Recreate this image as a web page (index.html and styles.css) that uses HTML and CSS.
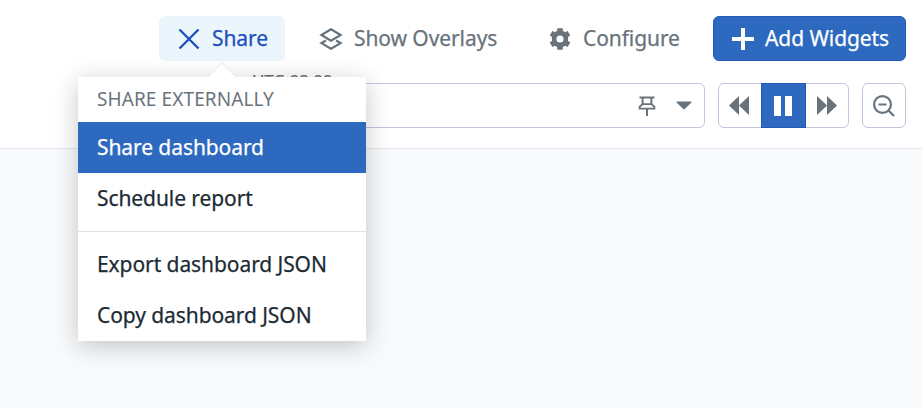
FILE: index.html
```html
<!DOCTYPE html>
<html lang="en">
<head>
<meta charset="utf-8">
<title>Dashboard</title>
<link rel="stylesheet" href="styles.css">
</head>
<body>
<header class="header">
  <nav class="actions">
    <div class="share">
      <button class="btn btn-share">
        <svg class="icon" width="22" height="22" viewBox="0 0 22 22"><path d="M1.500 1.500l19 19M20.500 1.500l-19 19" stroke="currentColor" stroke-width="2.300" fill="none"/></svg>
        <span>Share</span>
      </button>
      <div class="menu">
        <svg class="arrow" width="30" height="16" viewBox="0 0 30 16"><path d="M0 16L15 1l15 15z" fill="#fff"/><path d="M1 15L15 1l14 14" fill="none" stroke="#e4e5ef"/></svg>
        <div class="menu-title">SHARE EXTERNALLY</div>
        <a class="item active"><span>Share dashboard</span></a>
        <a class="item"><span>Schedule report</span></a>
        <div class="divider"></div>
        <a class="item"><span>Export dashboard JSON</span></a>
        <a class="item"><span>Copy dashboard JSON</span></a>
      </div>
    </div>
    <button class="btn btn-overlays">
      <svg class="icon" width="24" height="22" viewBox="0 0 24 22"><path d="M12 1.200l9.600 5.800-9.600 5.800-9.600-5.800zM7 12.500l-4.600 2.600 9.600 5.700 9.600-5.700-4.600-2.600" fill="none" stroke="currentColor" stroke-width="2.200"/></svg>
      <span>Show Overlays</span>
    </button>
    <button class="btn btn-configure">
      <svg class="icon" width="22" height="22" viewBox="0 0 22 22"><path fill="currentColor" fill-rule="evenodd" d="M8.200.3h5.600v2.700q1.300.5 2.400 1.300l2.400-1.400 2.700 4.500-2.300 1.500q.3 2.100 0 4.200l2.300 1.500-2.700 4.500-2.400-1.400q-1.100.8-2.400 1.300v2.700H8.200V19q-1.300-.5-2.400-1.300l-2.400 1.400L.7 14.600l2.300-1.500q-.3-2.100 0-4.200L.7 7.400l2.700-4.500 2.400 1.400Q6.900 3.500 8.200 3zM11 7.400a3.600 3.600 0 1 0 0 7.200a3.600 3.600 0 1 0 0-7.200z"/></svg>
      <span>Configure</span>
    </button>
    <button class="btn btn-add">
      <svg class="icon" width="22" height="22" viewBox="0 0 22 22"><path d="M11 0v22M0 11h22" stroke="currentColor" stroke-width="4"/></svg>
      <span>Add Widgets</span>
    </button>
  </nav>
  <div class="controls">
    <div class="timebox">
      <span class="zone">UTC-08:00</span>
      <svg width="18" height="20" viewBox="0 0 18 20"><path d="M1.500 1.500h15M4.600 1v7.500M13.400 1v7.500M9 13v7" stroke="currentColor" stroke-width="2"/><path d="M4.600 8.200L1.600 10.600v2h14.800v-2l-3-2.400z" fill="none" stroke="currentColor" stroke-width="1.800"/></svg>
      <svg width="16" height="9" viewBox="0 0 16 9"><path d="M1 .5h14q.8.500.2 1.200L8.700 8q-.7.700-1.400 0L.8 1.700Q.2 1 1 .5z" fill="currentColor"/></svg>
    </div>
    <div class="playback">
      <button class="cell back"><svg width="20" height="19" viewBox="0 0 20 19"><path d="M10 0v19L0 9.500zM20 0v19L10 9.500z" fill="currentColor"/></svg></button>
      <button class="cell pause"><svg width="18" height="20" viewBox="0 0 18 20"><path d="M0 0h7v20H0zM11 0h7v20h-7z" fill="currentColor"/></svg></button>
      <button class="cell"><svg width="20" height="19" viewBox="0 0 20 19"><path d="M0 0L10 9.500 0 19zM10 0l10 9.500L10 19z" fill="currentColor"/></svg></button>
    </div>
    <button class="zoom"><svg width="22" height="22" viewBox="0 0 22 22"><g fill="none" stroke="currentColor" stroke-width="2.200"><circle cx="9.500" cy="9.500" r="8.400"/><path d="M5.500 9.500h8M15.500 15.500l5.500 5.500"/></g></svg></button>
  </div>
</header>
<main class="canvas"></main>
</body>
</html>
```
FILE: styles.css
```css
* { box-sizing: border-box; }
body {
  margin: 0;
  min-height: 408px;
  background: #f9fafc;
  font-family: "Noto Sans", sans-serif;
  font-size: 21px;
  letter-spacing: -0.08px;
  -webkit-text-stroke: 0.25px currentColor;
  color: #1c2b34;
}
button { font: inherit; letter-spacing: inherit; color: inherit; border: 0; background: none; padding: 0; }
svg { display: block; flex: none; }
.header {
  height: 149px;
  padding: 16px 16px 0 0;
  background: #fff;
  border-bottom: 1px solid #e0e5ed;
}
.actions { display: flex; justify-content: flex-end; color: #69737b; }
.share { position: relative; margin-right: 16px; }
.btn {
  display: flex;
  align-items: center;
  height: 45px;
  border-radius: 6px;
  white-space: nowrap;
  line-height: 45px;
}
.btn-share { width: 126px; padding-left: 19px; gap: 12px; background: #ebf5fc; color: #1d4fba; }
.btn-overlays { width: 230px; padding-left: 18px; gap: 11px; }
.btn-configure { width: 182px; padding-left: 18px; gap: 12px; }
.btn-add {
  width: 193px;
  padding-left: 18px;
  gap: 11px;
  background: #2d69be;
  color: #fff;
  border: 1px solid #2359b5;
}
.menu {
  position: absolute;
  z-index: 2;
  top: 61px;
  left: -81px;
  width: 288px;
  height: 264px;
  background: #fff;
  color: #1c2b34;
  box-shadow: 0 5px 24px rgba(0, 0, 0, .22);
}
.arrow { position: absolute; left: 129px; top: -15px; }
.menu-title {
  height: 45px;
  padding-left: 19px;
  font-size: 19px;
  letter-spacing: 0.1px;
  line-height: 45px;
  color: #69737b;
  -webkit-text-stroke: 0;
}
.item { display: block; height: 51px; padding-left: 19px; line-height: 51px; white-space: nowrap; }
.item.active { background: #2d69be; color: #fff; }
.divider { height: 1px; margin: 7px 0; background: #dfe3e8; }
.controls { display: flex; justify-content: flex-end; gap: 13px; margin-top: 22px; color: #69737b; }
.timebox, .playback, .zoom { height: 45px; border: 1px solid #c3c6da; border-radius: 6px; background: #fff; }
.timebox {
  position: relative;
  display: flex;
  align-items: center;
  justify-content: flex-end;
  gap: 20px;
  width: 480px;
  padding-right: 12px;
}
.zone {
  position: absolute;
  top: -14px;
  left: 22px;
  padding: 0 4px;
  background: #fff;
  font-size: 17px;
  line-height: 22px;
}
.playback { display: flex; width: 131px; }
.cell { display: flex; align-items: center; justify-content: center; width: 42px; }
.cell.back { padding-right: 2px; }
.pause { width: 45px; height: 45px; margin-top: -1px; padding-right: 1px; background: #2d69be; border: 1px solid #2359b5; color: #fff; }
.zoom { display: flex; align-items: center; justify-content: center; width: 44px; }
```
